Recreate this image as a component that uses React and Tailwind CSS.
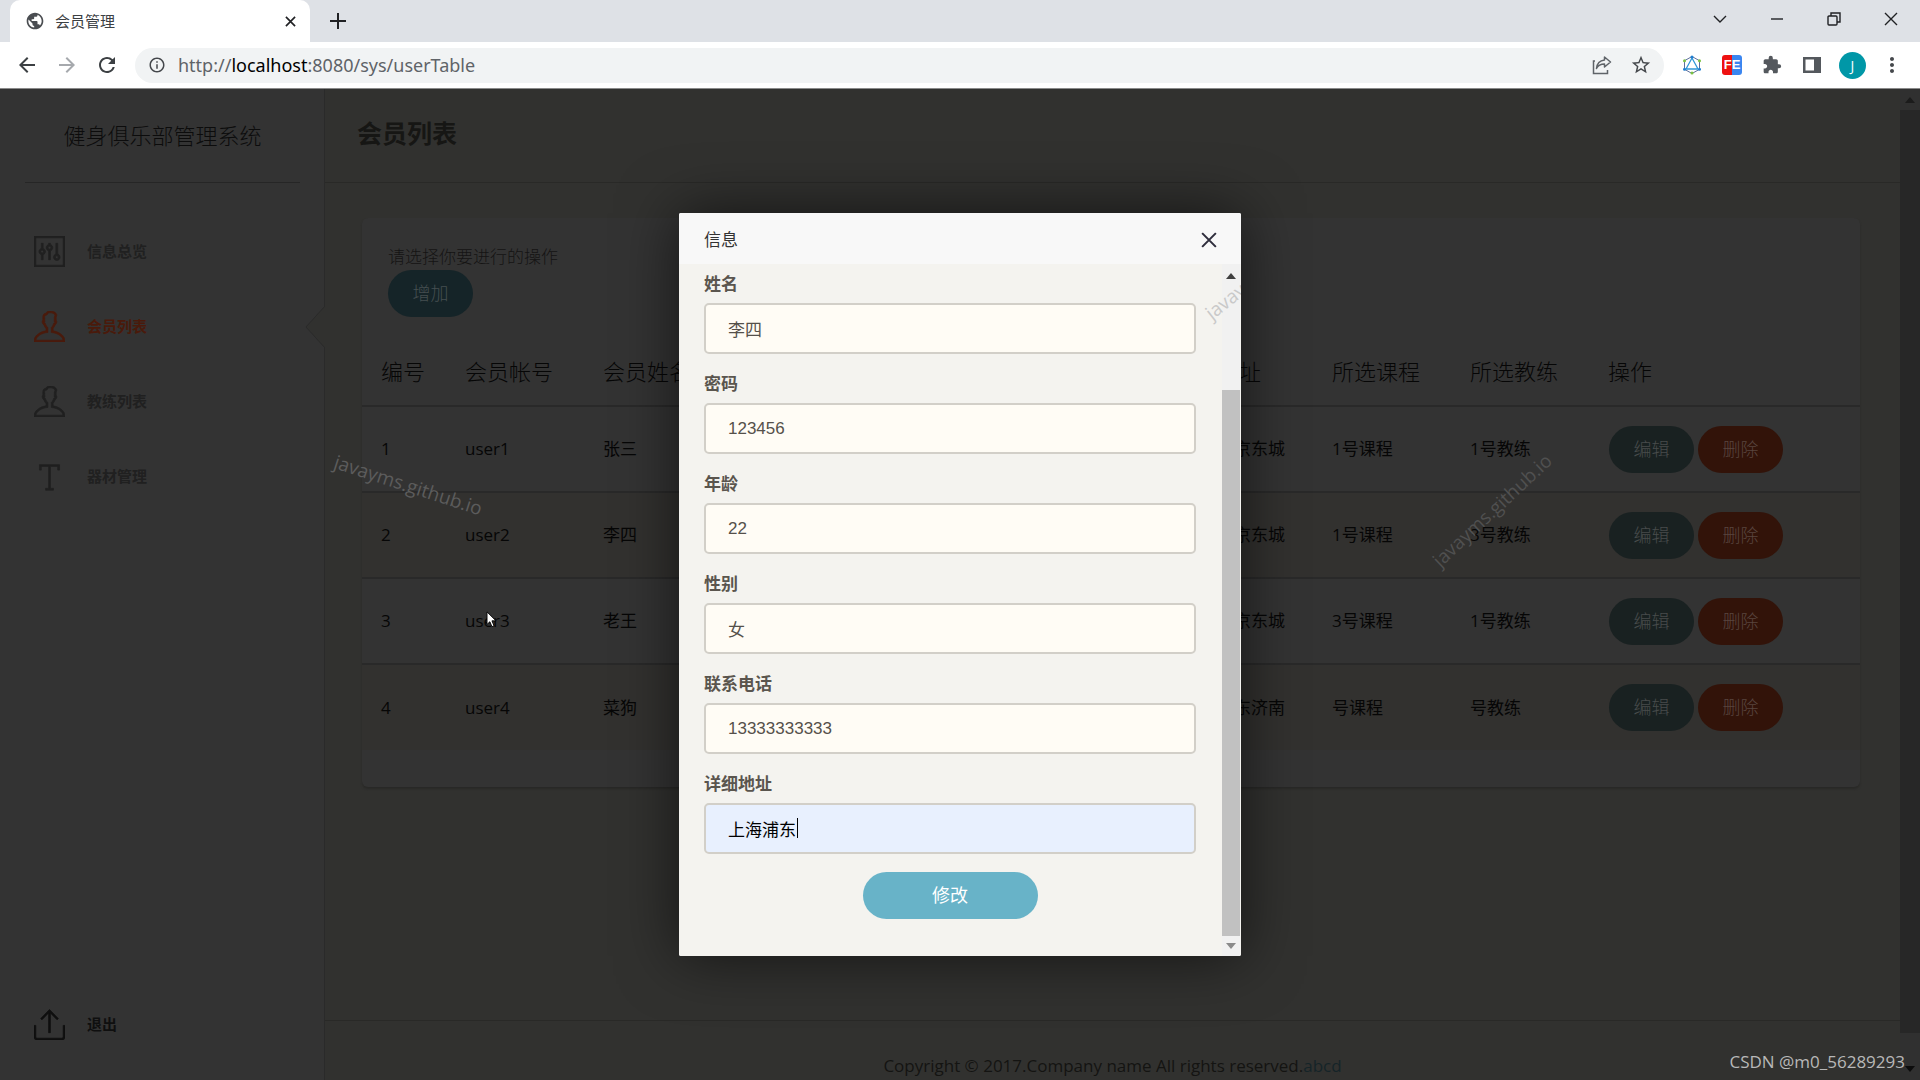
import { useState } from 'react'
import { TfiExport, TfiPanel, TfiText, TfiUser } from 'react-icons/tfi'
import {
  MdArrowBack,
  MdArrowForward,
  MdExtension,
  MdInfoOutline,
  MdMoreVert,
  MdPublic,
  MdRefresh,
  MdStarBorder,
} from 'react-icons/md'

const menuItems = [
  { label: '信息总览', icon: TfiPanel },
  { label: '会员列表', icon: TfiUser, active: true },
  { label: '教练列表', icon: TfiUser },
  { label: '器材管理', icon: TfiText },
]

const columns = [
  { title: '编号', width: 'w-[84px]' },
  { title: '会员帐号', width: 'w-[138px]' },
  { title: '会员姓名', width: 'w-[138px]' },
  { title: '密码', width: 'w-[110px]' },
  { title: '年龄', width: 'w-[84px]' },
  { title: '性别', width: 'w-[84px]' },
  { title: '联系电话', width: '' },
  { title: '地址', width: 'w-[115px]' },
  { title: '所选课程', width: 'w-[138px]' },
  { title: '所选教练', width: 'w-[138px]' },
  { title: '操作', width: 'w-[271px]' },
]

const members = [
  ['1', 'user1', '张三', '123456', '22', '男', '13333333333', '北京东城', '1号课程', '1号教练'],
  ['2', 'user2', '李四', '123456', '22', '女', '13333333333', '北京东城', '1号课程', '3号教练'],
  ['3', 'user3', '老王', '123456', '22', '男', '13333333333', '北京东城', '3号课程', '1号教练'],
  ['4', 'user4', '菜狗', '123456', '22', '男', '13333333333', '山东济南', '号课程', '号教练'],
]

const fields = [
  { id: 'name', label: '姓名', value: '李四' },
  { id: 'password', label: '密码', value: '123456' },
  { id: 'age', label: '年龄', value: '22' },
  { id: 'gender', label: '性别', value: '女' },
  { id: 'phone', label: '联系电话', value: '13333333333' },
  { id: 'address', label: '详细地址', value: '上海浦东', autofilled: true },
]

function BrowserBar() {
  return (
    <header className="shrink-0 border-b border-[#8a8a8a] bg-white text-[#3c4043]">
      <div className="flex h-[42px] items-stretch bg-[#dee1e6]">
        <div className="ml-[10px] flex w-[300px] items-center rounded-t-[10px] bg-white pr-[10px] pl-[15px]">
          <MdPublic className="size-5 text-[#4a4d51]" />
          <span className="ml-[10px] flex-1 text-[15px]">会员管理</span>
          <button type="button" aria-label="关闭标签页" className="flex size-5 items-center justify-center">
            <svg viewBox="0 0 12 12" className="size-[11px]" stroke="#202124" strokeWidth="1.8">
              <path d="M1 1l10 10M11 1L1 11" />
            </svg>
          </button>
        </div>
        <button type="button" aria-label="新标签页" className="ml-4 flex w-6 items-center justify-center">
          <svg viewBox="0 0 16 16" className="size-4" stroke="#202124" strokeWidth="2">
            <path d="M8 0v16M0 8h16" />
          </svg>
        </button>
        <div className="ml-auto flex items-center pr-[22px] pb-[5px]">
          <button type="button" aria-label="搜索标签页" className="flex w-[57px] justify-end">
            <svg viewBox="0 0 14 14" className="size-[14px]" fill="none" stroke="#202124" strokeWidth="1.4">
              <path d="M1 4l6 6 6-6" />
            </svg>
          </button>
          <button type="button" aria-label="最小化" className="flex w-[57px] justify-end">
            <svg viewBox="0 0 14 14" className="size-[14px]" stroke="#202124" strokeWidth="1.4">
              <path d="M1 7h12" />
            </svg>
          </button>
          <button type="button" aria-label="还原" className="flex w-[57px] justify-end">
            <svg viewBox="0 0 14 14" className="size-[14px]" fill="none" stroke="#202124" strokeWidth="1.4">
              <rect x="1" y="4" width="9" height="9" rx="1" />
              <path d="M4 4V1h9v9h-3" />
            </svg>
          </button>
          <button type="button" aria-label="关闭" className="flex w-[57px] justify-end">
            <svg viewBox="0 0 14 14" className="size-[14px]" stroke="#202124" strokeWidth="1.4">
              <path d="M1 1l12 12M13 1L1 13" />
            </svg>
          </button>
        </div>
      </div>

      <div className="flex h-[46px] items-center pr-5 pl-[15px]">
        <div className="flex gap-4 text-[24px]">
          <button type="button" aria-label="后退">
            <MdArrowBack className="text-[#3c4043]" />
          </button>
          <button type="button" aria-label="前进">
            <MdArrowForward className="text-[#a6a9ad]" />
          </button>
          <button type="button" aria-label="重新加载">
            <MdRefresh className="text-[#3c4043]" />
          </button>
        </div>
        <div className="ml-4 flex h-[35px] flex-1 items-center rounded-full bg-[#f1f3f4] pr-3 pl-[13px]">
          <MdInfoOutline className="size-[18px] text-[#45484c]" />
          <div
            role="textbox"
            aria-label="地址栏"
            contentEditable
            suppressContentEditableWarning
            spellCheck={false}
            className="ml-3 flex-1 font-['Noto_Sans',sans-serif] text-[18px] text-[#5f6368] outline-none"
          >
            http://<span className="text-black">localhost</span>:8080/sys/userTable
          </div>
          <button type="button" aria-label="分享" className="mr-[18px]">
            <svg viewBox="0 0 20 20" className="size-5" fill="none" stroke="#5f6368" strokeWidth="1.5">
              <path d="M3 6H1.500v12.500h14V15" />
              <path d="M12.500 2l6 5-6 5V9c-4 0-6.500 1.500-8 4.500C5 8.500 8 5.500 12.500 5z" strokeLinejoin="round" />
            </svg>
          </button>
          <button type="button" aria-label="收藏">
            <MdStarBorder className="size-[22px] text-[#45484c]" />
          </button>
        </div>
        <div className="ml-[18px] flex items-center gap-5">
          <svg viewBox="0 0 20 20" className="size-5" fill="none">
            <path d="M10 1.500l7.500 4.200v8.600L10 18.500l-7.500-4.200V5.700z" stroke="#5c6f9c" />
            <path d="M10 3l6 11H4z" stroke="#2f97d8" strokeWidth="1.300" />
            <circle cx="10" cy="2" r="1.500" fill="#1f7fd0" />
            <circle cx="17.500" cy="14.300" r="1.500" fill="#1f7fd0" />
            <circle cx="2.500" cy="14.300" r="1.500" fill="#1f7fd0" />
            <circle cx="17.500" cy="5.700" r="1.500" fill="#7ac142" />
            <circle cx="2.500" cy="5.700" r="1.500" fill="#7ac142" />
            <circle cx="10" cy="18" r="1.500" fill="#7ac142" />
          </svg>
          <span className="flex size-5 items-center justify-center rounded-[3px] bg-linear-to-r from-[#ee1111] from-50% to-[#3a86f0] to-50% font-['Liberation_Sans',sans-serif] text-[13px] font-bold text-white">
            FE
          </span>
          <MdExtension className="size-5 text-[#54585d]" />
          <svg viewBox="0 0 20 20" className="size-5">
            <path d="M1 2h18v16H1z M3.500 4.500v11h8.500v-11z" fill="#54585d" fillRule="evenodd" />
          </svg>
        </div>
        <span className="ml-[17px] flex size-[27px] items-center justify-center rounded-full bg-[#0097a7] text-[14px] text-white">
          J
        </span>
        <MdMoreVert className="-mr-1 ml-[14px] size-6 text-[#45484c]" />
      </div>
    </header>
  )
}

function Sidebar() {
  return (
    <aside className="relative flex w-[325px] shrink-0 flex-col border-r border-[#2a2a2a] bg-[#333333]">
      <h1 className="mr-6 ml-[25px] flex h-[94px] items-center justify-center border-b border-[#262626] text-[22px] font-light text-[#0c0c0c]">
        健身俱乐部管理系统
      </h1>
      <nav className="mt-[31px]">
        {menuItems.map(({ label, icon: Icon, active }) => (
          <a
            key={label}
            href="#"
            className={`relative flex h-[75px] items-center gap-[22px] pl-[34px] text-[15px] font-bold ${
              active ? 'text-[#4a1a0b]' : 'text-[#202020]'
            }`}
          >
            <Icon className="size-[31px]" strokeWidth="0.4" />
            {label}
            {active && (
              <svg viewBox="0 0 20 42" className="absolute top-[17px] -right-px h-[42px] w-5">
                <path d="M20 0L1 21l19 21z" fill="#31312f" />
                <path d="M20 0L1 21l19 21" fill="none" stroke="#2a2a2a" />
              </svg>
            )}
          </a>
        ))}
      </nav>
      <a href="#" className="mt-auto mb-5 flex h-[71px] items-center gap-[22px] pl-[34px] text-[15px] font-bold text-[#0f0f0f]">
        <TfiExport className="size-[31px]" strokeWidth="0.4" />
        退出
      </a>
    </aside>
  )
}

function PillButton({ className, children }) {
  return (
    <button
      type="button"
      className={`h-[47px] w-[85px] rounded-full text-[18px] font-light ${className}`}
    >
      {children}
    </button>
  )
}

function MemberTable() {
  return (
    <table className="mt-5 w-full table-fixed border-collapse text-left text-[#060606]">
      <thead>
        <tr className="h-[69px]">
          {columns.map((column) => (
            <th key={column.title} className={`pl-[19px] text-[22px] font-light whitespace-nowrap ${column.width}`}>
              {column.title}
            </th>
          ))}
        </tr>
      </thead>
      <tbody>
        {members.map((row) => (
          <tr key={row[0]} className="h-[86px] border-t-2 border-[#292929] text-[17px] even:bg-[#32312f]">
            {row.map((cell, index) => (
              <td key={columns[index].title} className="pl-[19px] whitespace-nowrap">
                {cell}
              </td>
            ))}
            <td className="pl-5">
              <div className="flex gap-1">
                <PillButton className="bg-[#192121] text-[#484c4c]">编辑</PillButton>
                <PillButton className="bg-[#321309] text-[#59453f]">删除</PillButton>
              </div>
            </td>
          </tr>
        ))}
      </tbody>
    </table>
  )
}

function MemberDialog() {
  const [values, setValues] = useState(() => Object.fromEntries(fields.map((field) => [field.id, field.value])))

  return (
    <div
      role="dialog"
      aria-label="信息"
      className="relative w-[562px] overflow-hidden rounded-[2px] bg-white shadow-[0_0_60px_rgba(0,0,0,0.6)]"
    >
      <div className="flex h-[51px] items-center justify-between bg-[#f8f8f8] pt-[2px] pr-[24px] pl-[25px] text-[17px] text-[#333333]">
        信息
        <button type="button" aria-label="关闭">
          <svg viewBox="0 0 14 14" className="size-4" stroke="#2e2d3c" strokeWidth="1.8">
            <path d="M1 1l12 12M13 1L1 13" />
          </svg>
        </button>
      </div>
      <div className="flex bg-[#f4f3ef]">
        <form className="flex-1 pt-[7px] pr-[26px] pb-[37px] pl-[25px]" onSubmit={(event) => event.preventDefault()}>
          <div className="flex flex-col gap-[17px]">
            {fields.map((field) => (
              <div key={field.id}>
                <label htmlFor={field.id} className="block text-[17px] leading-[26px] font-bold text-[#5a554e]">
                  {field.label}
                </label>
                <input
                  id={field.id}
                  value={values[field.id]}
                  onChange={(event) => setValues({ ...values, [field.id]: event.target.value })}
                  className={`mt-[6px] block h-[51px] w-full rounded-[5px] border-2 border-[#d2cfc8] px-[22px] font-['Liberation_Sans','Noto_Sans_CJK_SC',sans-serif] text-[17px] outline-none ${
                    field.autofilled ? 'bg-[#e8f0fe] text-black' : 'bg-[#fffcf5] text-[#55504a]'
                  }`}
                />
              </div>
            ))}
          </div>
          <button
            type="submit"
            className="mx-auto mt-[18px] block h-[47px] w-[175px] rounded-full bg-[#68b3c8] text-[18px] text-white"
          >
            修改
          </button>
        </form>
        <div className="mr-px flex w-[18px] flex-col items-center bg-[#f1f1f1]">
          <svg viewBox="0 0 10 6" className="mt-[9px] h-[6px] w-[10px]">
            <path d="M5 0l5 6H0z" fill="#404040" />
          </svg>
          <div className="mt-[111px] w-full flex-1 bg-[#c1c1c1]" />
          <svg viewBox="0 0 10 6" className="mt-[7px] mb-[7px] h-[6px] w-[10px]">
            <path d="M5 6L0 0h10z" fill="#8a8a8a" />
          </svg>
        </div>
      </div>
      {/* caret after the address text */}
      <span className="absolute bottom-[118px] left-[118px] h-[20px] w-px bg-black" />
      <span className="absolute top-[74px] left-[524px] -rotate-38 text-[19px] text-[#c9c9c9]">javay</span>
    </div>
  )
}

export default function App() {
  return (
    <div className="flex h-screen flex-col overflow-hidden font-['Open_Sans','Noto_Sans_CJK_SC',sans-serif]">
      <BrowserBar />
      <div className="relative flex min-h-0 flex-1 bg-[#31312f]">
        <Sidebar />
        <div className="flex min-w-0 flex-1 flex-col">
          <div className="flex h-[94px] shrink-0 items-center border-b border-[#292927] pb-1 pl-8">
            <h2 className="text-[25px] font-bold text-[#161614]">会员列表</h2>
          </div>
          <main className="flex-1 pt-[35px] pr-10 pl-[37px]">
            <section className="rounded-md bg-[#333333] pt-[26px] pb-[37px] shadow-[0_2px_2px_#292927]">
              <div className="pl-[26px]">
                <p className="text-[17px] leading-[26px] font-light text-[#151413]">请选择你要进行的操作</p>
                <PillButton className="bg-[#152428] text-[#454f51]">增加</PillButton>
              </div>
              <MemberTable />
            </section>
          </main>
          <footer className="flex h-[60px] shrink-0 items-end justify-center border-t border-[#292927] pb-[2px] text-[17px] text-[#141412]">
            Copyright © 2017.Company name All rights reserved.
            <a href="#" className="text-[#152428]">
              abcd
            </a>
          </footer>
        </div>
        <div className="flex w-5 shrink-0 flex-col items-center bg-[#303030]">
          <svg viewBox="0 0 10 6" className="mt-2 h-[6px] w-[10px]">
            <path d="M5 0l5 6H0z" fill="#1b1b1b" />
          </svg>
          <div className="mt-[7px] mb-[33px] w-full flex-1 bg-[#272727]" />
          <svg viewBox="0 0 10 6" className="mb-2 h-[6px] w-[10px]">
            <path d="M5 6L0 0h10z" fill="#0c0c0c" />
          </svg>
        </div>

        <span className="absolute top-[382px] left-[331px] rotate-18 text-[19px] text-[#5c5c5c]">javayms.github.io</span>
        <span className="absolute top-[407px] left-[1415px] -rotate-43 text-[19px] text-[#505050]">javayms.github.io</span>
        <svg viewBox="0 0 12 19" className="absolute top-[522px] left-[486px] h-[17px] w-[11px]">
          <path d="M1 1v14l3.200-3 2.300 5.500 2.300-1L6.500 11H11z" fill="white" stroke="black" />
        </svg>
        <span className="absolute right-[15px] bottom-[6px] text-[17px] text-[#b8b8b8]">CSDN @m0_56289293</span>

        <div className="absolute inset-0 flex items-center justify-center">
          <MemberDialog />
        </div>
      </div>
    </div>
  )
}
